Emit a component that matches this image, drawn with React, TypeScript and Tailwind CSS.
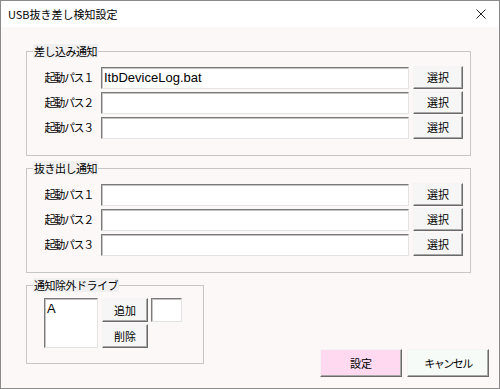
import React from 'react';

const jp = { fontFamily: '"Noto Sans CJK JP", "Liberation Sans", sans-serif' };

function TextBox({ w, h, value }: { w: string; h: string; value?: string }) {
  return (
    <div
      className={`${w} ${h} bg-white border border-t-[#7a7a7a] border-l-[#7a7a7a] border-b-[#e3e3e3] border-r-[#e3e3e3] shadow-[inset_1px_1px_0_#c4c4c4] text-[13px] leading-[20px] pl-[2px] text-black`}
      style={{ fontFamily: '"Liberation Sans", "Noto Sans CJK JP", sans-serif' }}
    >
      {value}
    </div>
  );
}

function Btn({ label, className }: { label: string; className: string }) {
  return (
    <div
      className={`${className} flex items-center justify-center border border-t-[#f4f4f4] border-l-[#f4f4f4] border-b-[#6a6a6a] border-r-[#6a6a6a] shadow-[inset_-1px_-1px_0_#a8a8a8] text-[11px] text-black`}
    >
      {label}
    </div>
  );
}

function Group({ title, className, children }: { title: string; className: string; children: React.ReactNode }) {
  return (
    <div className={`relative border border-[#c6c6c6] ${className}`}>
      <span className="absolute -top-[8px] left-[6px] bg-[#f1f0f0] px-[1px] text-[11px] leading-[14px] tracking-[-0.5px] text-black">
        {title}
      </span>
      {children}
    </div>
  );
}

function PathRow({ n, value }: { n: string; value?: string }) {
  return (
    <div className="flex items-center h-[25px]">
      <div className="w-[66px] text-right text-[11px] tracking-[-1.3px] text-black">起動パス{n}</div>
      <div className="ml-[8px]">
        <TextBox w="w-[308px]" h="h-[22px]" value={value} />
      </div>
      <Btn label="選択" className="ml-[4px] w-[50px] h-[23px] bg-[#f5f6f5]" />
    </div>
  );
}

export default function App() {
  return (
    <div className="w-[500px] h-[389px] border border-[#8a8a8a] flex flex-col bg-[#fdf8f8]" style={jp}>
      <div className="h-[26px] bg-white flex items-center justify-between pl-[7px] pr-[13px]">
        <span className="text-[11px] text-black">USB抜き差し検知設定</span>
        <svg width="10" height="10" viewBox="0 0 10 10">
          <path d="M0.5 0.5 L9.5 9.5 M9.5 0.5 L0.5 9.5" stroke="#222" strokeWidth="1" />
        </svg>
      </div>
      <div className="flex-1 flex flex-col pl-[25px] pr-[10px]">
        <Group title="差し込み通知" className="mt-[24px] w-[445px] h-[105px] pt-[13px]">
          <PathRow n="１" value="ItbDeviceLog.bat" />
          <PathRow n="２" />
          <PathRow n="３" />
        </Group>
        <Group title="抜き出し通知" className="mt-[12px] w-[445px] h-[105px] pt-[13px]">
          <PathRow n="１" />
          <PathRow n="２" />
          <PathRow n="３" />
        </Group>
        <div className="flex mt-[12px]">
          <Group title="通知除外ドライブ" className="w-[178px] h-[79px] pt-[12px] pl-[17px]">
            <div className="flex">
              <TextBox w="w-[54px]" h="h-[50px]" value="A" />
              <div className="ml-[4px] flex flex-col gap-[2px]">
                <Btn label="追加" className="w-[46px] h-[24px] bg-[#f5f6f5]" />
                <Btn label="削除" className="w-[46px] h-[24px] bg-[#f5f6f5]" />
              </div>
              <div className="ml-[3px]">
                <TextBox w="w-[31px]" h="h-[24px]" />
              </div>
            </div>
          </Group>
          <div className="ml-auto mt-[64px] flex gap-[5px]">
            <Btn label="設定" className="w-[82px] h-[28px] bg-[#fed9ef]" />
            <Btn label="キャンセル" className="w-[82px] h-[28px] bg-[#f7fbf7] tracking-[-1.5px]" />
          </div>
        </div>
      </div>
    </div>
  );
}
